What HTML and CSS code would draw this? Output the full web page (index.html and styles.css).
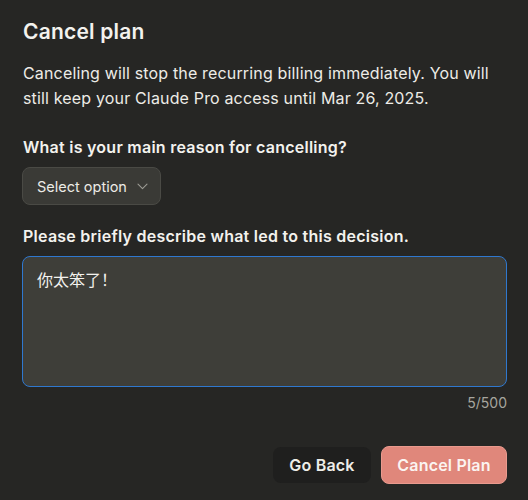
FILE: index.html
```html
<!DOCTYPE html>
<html lang="en">
<head>
<meta charset="utf-8">
<title>Cancel plan</title>
<link rel="stylesheet" href="styles.css">
</head>
<body>
<main class="dialog">
  <h1 class="title">Cancel plan</h1>
  <p class="desc">Canceling will stop the recurring billing immediately. You will still keep your Claude Pro access until Mar 26, 2025.</p>

  <div class="field">
    <div class="label">What is your main reason for cancelling?</div>
    <button class="select" type="button">
      <span>Select option</span>
      <svg class="chev" width="11" height="7" viewBox="0 0 11 7" fill="none"><path d="M1 1.2 L5.5 5.6 L10 1.2" stroke="#9c9b94" stroke-width="1.1" stroke-linecap="round" stroke-linejoin="round"/></svg>
    </button>
  </div>

  <div class="field">
    <div class="label">Please briefly describe what led to this decision.</div>
    <div class="textarea" lang="zh-CN">你太笨了！</div>
    <div class="counter">5/500</div>
  </div>

  <div class="actions">
    <button class="btn btn-ghost" type="button">Go Back</button>
    <button class="btn btn-danger" type="button">Cancel Plan</button>
  </div>
</main>
</body>
</html>
```

FILE: styles.css
```css
html, body {
  margin: 0;
  padding: 0;
  background: #262624;
}
body {
  font-family: Inter, "Noto Sans", "Noto Sans CJK SC", sans-serif;
  color: #f3f2ee;
  width: 528px;
  height: 500px;
  overflow: hidden;
}
.dialog {
  padding: 18px 21px 0 22px;
  display: flex;
  flex-direction: column;
}
.title {
  margin: 0 0 0 1px;
  font-size: 21px;
  line-height: 28px;
  font-weight: 600;
  letter-spacing: 0.2px;
}
.desc {
  margin: 15px 0 0 1px;
  font-size: 16px;
  line-height: 25px;
  letter-spacing: 0.16px;
  color: #edece7;
}
.field {
  display: flex;
  flex-direction: column;
}
.label {
  margin: 25px 0 0 1px;
  font-size: 16px;
  line-height: 22px;
  font-weight: 600;
  letter-spacing: 0.25px;
}
.select {
  margin-top: 9px;
  align-self: flex-start;
  display: flex;
  align-items: center;
  gap: 10px;
  width: 139px;
  height: 38px;
  padding: 0 0 0 14px;
  background: #3a3a36;
  border: 1px solid #4a4a45;
  border-radius: 8px;
  color: #ecebe6;
  font-family: inherit;
  font-size: 14.5px;
}
.chev {
  margin-top: 1px;
}
.field + .field .label {
  margin-top: 20px;
}
.textarea {
  margin-top: 9px;
  height: 131px;
  box-sizing: border-box;
  padding: 12px 14px;
  background: #3e3e39;
  border: 1px solid #2f78cf;
  border-radius: 8px;
  font-family: Inter, "Noto Sans CJK SC", sans-serif;
  font-size: 16px;
  line-height: 22px;
  color: #f3f2ee;
}
.counter {
  align-self: flex-end;
  margin-top: 6px;
  font-size: 14px;
  line-height: 20px;
  color: #a6a59e;
}
.actions {
  margin-top: 33px;
  display: flex;
  justify-content: flex-end;
  align-items: center;
  gap: 10px;
}
.btn {
  font-family: inherit;
  font-size: 16px;
  font-weight: 600;
  letter-spacing: 0.2px;
  border-radius: 8px;
  cursor: pointer;
}
.btn-ghost {
  width: 98px;
  height: 36px;
  background: #1f1f1e;
  border: none;
  color: #eeede8;
}
.btn-danger {
  width: 126px;
  height: 38px;
  background: #e0877b;
  border: 1px solid #e99a8e;
  color: #fbf4f1;
}
```
